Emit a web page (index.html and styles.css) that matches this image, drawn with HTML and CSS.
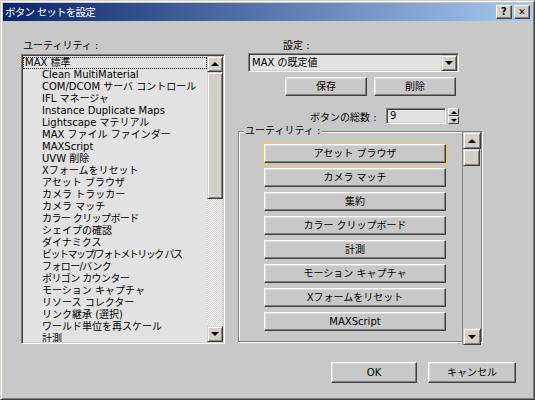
FILE: index.html
```html
<!DOCTYPE html>
<html lang="ja">
<head>
<meta charset="utf-8">
<title>ボタン セットを設定</title>
<link rel="stylesheet" href="styles.css">
</head>
<body>
<div class="window">
  <div class="titlebar">
    <span class="title">ボタン セットを設定</span>
    <div class="tb-btns">
      <span class="tb-btn">?</span>
      <span class="tb-btn tb-close">✕</span>
    </div>
  </div>
  <div class="content">
    <div class="columns">
      <div class="left">
        <div class="label">ユーティリティ :</div>
        <div class="listbox sunken">
          <ul class="items">
            <li class="top focus">MAX 標準</li>
            <li>Clean MultiMaterial</li>
            <li>COM/DCOM サーバ コントロール</li>
            <li>IFL マネージャ</li>
            <li>Instance Duplicate Maps</li>
            <li>Lightscape マテリアル</li>
            <li>MAX ファイル ファインダー</li>
            <li>MAXScript</li>
            <li>UVW 削除</li>
            <li>Xフォームをリセット</li>
            <li>アセット ブラウザ</li>
            <li>カメラ トラッカー</li>
            <li>カメラ マッチ</li>
            <li class="tight">カラー クリップボード</li>
            <li>シェイプの確認</li>
            <li>ダイナミクス</li>
            <li class="tighter">ビットマップ/フォトメトリック パス</li>
            <li class="tight">フォロー/バンク</li>
            <li class="tight">ポリゴン カウンター</li>
            <li>モーション キャプチャ</li>
            <li>リソース コレクター</li>
            <li>リンク継承 (選択)</li>
            <li>ワールド単位を再スケール</li>
            <li>計測</li>
          </ul>
          <div class="vscroll checker">
            <span class="sbtn"><i class="tri up"></i></span>
            <span class="thumb list-thumb"></span>
            <span class="track"></span>
            <span class="sbtn"><i class="tri down"></i></span>
          </div>
        </div>
      </div>
      <div class="right">
        <div class="label set-label">設定 :</div>
        <div class="combo sunken">
          <span class="combo-text">MAX の既定値</span>
          <span class="sbtn combo-btn"><i class="tri down"></i></span>
        </div>
        <div class="btn-row">
          <span class="btn">保存</span>
          <span class="btn">削除</span>
        </div>
        <div class="count-row">
          <span class="count-label">ボタンの総数 :</span>
          <span class="spin-edit sunken">9</span>
          <span class="spinner">
            <span class="spin-half"><i class="tri up small"></i></span>
            <span class="spin-half"><i class="tri down small"></i></span>
          </span>
        </div>
        <div class="group">
          <span class="group-label">ユーティリティ :</span>
          <div class="group-btns">
            <span class="btn wide focused">アセット ブラウザ</span>
            <span class="btn wide">カメラ マッチ</span>
            <span class="btn wide">集約</span>
            <span class="btn wide">カラー クリップボード</span>
            <span class="btn wide">計測</span>
            <span class="btn wide">モーション キャプチャ</span>
            <span class="btn wide">Xフォームをリセット</span>
            <span class="btn wide">MAXScript</span>
          </div>
          <div class="vscroll group-scroll">
            <span class="sbtn"><i class="tri up"></i></span>
            <span class="thumb group-thumb"></span>
            <span class="track"></span>
            <span class="sbtn"><i class="tri down"></i></span>
          </div>
        </div>
      </div>
    </div>
    <div class="footer">
      <span class="btn foot-btn ok">OK</span>
      <span class="btn foot-btn cancel">キャンセル</span>
    </div>
  </div>
</div>
</body>
</html>
```

FILE: styles.css
```css
* { box-sizing: border-box; }

html, body {
  margin: 0;
  padding: 0;
  background: #c8c8c8;
}

body {
  font-family: "DejaVu Sans", "Noto Sans CJK JP", sans-serif;
  font-size: 10px;
  color: #000;
}

.window {
  width: 535px;
  height: 400px;
  background: #c8c8c8;
  border: 1px solid;
  border-color: #d4d0c8 #404040 #404040 #d4d0c8;
  box-shadow: inset 1px 1px #ffffff, inset -1px -1px #808080;
  padding: 2px;
  display: flex;
  flex-direction: column;
}

.titlebar {
  height: 18px;
  background: linear-gradient(to right, #0a246a, #a6caf0);
  display: flex;
  align-items: center;
  justify-content: space-between;
  padding: 0 2px 0 2px;
}

.title {
  color: #ffffff;
  font-size: 10.5px;
  letter-spacing: -0.8px;
  line-height: 18px;
}

.tb-btns {
  display: flex;
  gap: 2px;
}

.tb-btn {
  width: 16px;
  height: 14px;
  background: #d4d0c8;
  border: 1px solid;
  border-color: #ffffff #404040 #404040 #ffffff;
  box-shadow: inset -1px -1px #808080;
  display: flex;
  align-items: center;
  justify-content: center;
  font-family: "DejaVu Sans", sans-serif;
  font-weight: bold;
  font-size: 10px;
  line-height: 1;
}

.tb-close {
  font-size: 9px;
}

.content {
  flex: 1;
  display: flex;
  flex-direction: column;
  padding: 17px 0 0 18px;
}

.columns {
  display: flex;
}

.label {
  line-height: 16px;
  height: 16px;
  padding-left: 2px;
}

.left {
  width: 204px;
}

.sunken {
  border: 1px solid;
  border-color: #808080 #ffffff #ffffff #808080;
  box-shadow: inset 1px 1px #404040, inset -1px -1px #d4d0c8;
}

.listbox {
  height: 290px;
  background: #e2e2e2;
  display: flex;
  padding: 1px;
}

.items {
  list-style: none;
  margin: 0;
  padding: 1px 0 0 0;
  flex: 1;
  overflow: hidden;
}

.items li {
  line-height: 12px;
  height: 12px;
  padding-left: 19px;
  white-space: nowrap;
}

.items li.tight {
  letter-spacing: -0.6px;
}

.items li.tighter {
  letter-spacing: -1.5px;
}

.items li.top {
  padding-left: 2px;
}

.items li.focus {
  outline: 1px dotted #000;
  outline-offset: -1px;
}

.vscroll {
  width: 16px;
  display: flex;
  flex-direction: column;
}

.checker {
  background-color: #ffffff;
  background-image: repeating-conic-gradient(#d4d0c8 0% 25%, #ffffff 0% 50%);
  background-size: 2px 2px;
}

.sbtn {
  display: flex;
  align-items: center;
  justify-content: center;
  width: 16px;
  height: 16px;
  background: #d4d0c8;
  border: 1px solid;
  border-color: #d4d0c8 #404040 #404040 #d4d0c8;
  box-shadow: inset 1px 1px #ffffff, inset -1px -1px #808080;
  flex: none;
}

.thumb {
  background: #d4d0c8;
  border: 1px solid;
  border-color: #d4d0c8 #404040 #404040 #d4d0c8;
  box-shadow: inset 1px 1px #ffffff, inset -1px -1px #808080;
  flex: none;
}

.list-thumb {
  height: 127px;
}

.track {
  flex: 1;
}

.tri {
  width: 0;
  height: 0;
  border-left: 4px solid transparent;
  border-right: 4px solid transparent;
  display: block;
}

.tri.up {
  border-bottom: 4px solid #000;
}

.tri.down {
  border-top: 4px solid #000;
}

.tri.small {
  border-left-width: 3px;
  border-right-width: 3px;
}

.tri.small.up { border-bottom-width: 3px; }
.tri.small.down { border-top-width: 3px; }

.right {
  margin-left: 13px;
  width: 246px;
  display: flex;
  flex-direction: column;
}

.set-label {
  padding-left: 45px;
  height: 15px;
}

.combo {
  margin-left: 10px;
  width: 211px;
  height: 19px;
  background: #e2e2e2;
  display: flex;
  align-items: center;
  justify-content: space-between;
  padding: 0 1px 0 3px;
}

.combo-text {
  line-height: 14px;
}

.btn {
  display: flex;
  align-items: center;
  justify-content: center;
  background: #c8c8c8;
  border: 1px solid;
  border-color: #ffffff #404040 #404040 #ffffff;
  box-shadow: inset -1px -1px #808080, inset 1px 1px #dcdcdc;
  line-height: 14px;
  white-space: nowrap;
}

.btn-row {
  display: flex;
  gap: 7px;
  margin: 5px 0 0 47px;
}

.btn-row .btn {
  width: 82px;
  height: 19px;
}

.count-row {
  display: flex;
  align-items: center;
  margin: 12px 0 0 0;
  height: 16px;
}

.count-label {
  margin-left: 72px;
  width: 76px;
}

.spin-edit {
  width: 60px;
  height: 16px;
  background: #e2e2e2;
  line-height: 14px;
  padding-left: 3px;
}

.spinner {
  margin-left: 2px;
  width: 11px;
  height: 16px;
  display: flex;
  flex-direction: column;
}

.spin-half {
  flex: 1;
  display: flex;
  align-items: center;
  justify-content: center;
  background: #d4d0c8;
  border: 1px solid;
  border-color: #ffffff #404040 #404040 #ffffff;
}

.group {
  position: relative;
  margin-top: 7px;
  width: 244px;
  height: 211px;
  border: 1px solid #808080;
  box-shadow: inset 1px 1px #ffffff, 1px 1px #ffffff;
  display: flex;
  flex-direction: column;
}

.group-label {
  align-self: flex-start;
  margin: -8px 0 0 5px;
  padding: 0 1px;
  background: #c8c8c8;
  line-height: 14px;
}

.group-btns {
  display: flex;
  flex-direction: column;
  gap: 5px;
  margin: 6px 0 0 25px;
}

.btn.wide {
  width: 182px;
  height: 19px;
}

.btn.focused {
  outline: 1px solid #f2c84b;
  outline-offset: 1px;
}

.group-scroll {
  position: absolute;
  top: 0;
  right: 1px;
  width: 18px;
  height: 213px;
  background: #c8c8c8;
  border-left: 1px solid #808080;
}

.group-scroll .sbtn {
  width: 18px;
  height: 17px;
}

.group-thumb {
  height: 17px;
}

.footer {
  display: flex;
  gap: 11px;
  margin: 18px 0 0 310px;
}

.foot-btn {
  height: 21px;
}

.ok { width: 86px; }
.cancel { width: 88px; }
```
